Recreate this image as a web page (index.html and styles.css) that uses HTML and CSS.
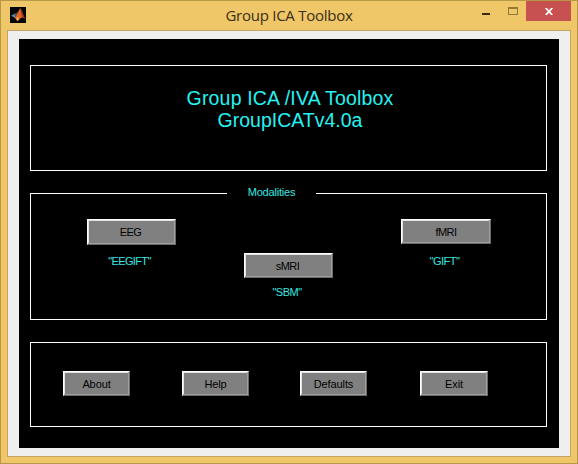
FILE: index.html
```html
<!DOCTYPE html>
<html lang="en">
<head>
<meta charset="utf-8">
<title>Group ICA Toolbox</title>
<link rel="stylesheet" href="styles.css">
</head>
<body>
<div class="window">
  <header class="titlebar">
    <svg class="app-icon" viewBox="0 0 16 16" width="16" height="16">
      <rect width="16" height="16" fill="#050608"/>
      <path d="M1 8.7 5 6.6 7 8 5 11Z" fill="#4a91ad"/>
      <path d="M5 6.6 7.2 5.4 10.3 1.3 8.5 8 5 11Z" fill="#61453f"/>
      <path d="M4.5 10.5C7 9 8.3 5 10.3 1.3 11.6 3 13 8 15 11.5 12.8 10 11.5 10 9.7 12 8.3 14.2 7.3 14.6 6.7 13Z" fill="#df6524"/>
      <path d="M6.2 11.3 8.2 9.8 8.8 12.5 7.2 14Z" fill="#f4b354"/>
      <path d="M10.3 1.3 11 6 12.2 9.8 15 11.5C13 7.5 11.8 3 10.3 1.3Z" fill="#99351c"/>
    </svg>
    <h1 class="caption">Group ICA Toolbox</h1>
    <div class="controls">
      <span class="minimize"></span>
      <span class="maximize"></span>
      <span class="close">
        <svg viewBox="0 0 8 7" width="8" height="7"><path d="M.7 0 7.3 7M7.3 0 .7 7" stroke="#fff" stroke-width="1.8"/></svg>
      </span>
    </div>
  </header>
  <main class="client">
    <div class="figure">
      <section class="frame banner">
        <p class="product">Group ICA /IVA Toolbox</p>
        <p class="version">GroupICATv4.0a</p>
      </section>
      <section class="frame modalities">
        <h2 class="legend">Modalities</h2>
        <div class="modality eeg"><button>EEG</button><span>"EEGIFT"</span></div>
        <div class="modality smri"><button>sMRI</button><span>"SBM"</span></div>
        <div class="modality fmri"><button>fMRI</button><span>"GIFT"</span></div>
      </section>
      <section class="frame actions">
        <button>About</button>
        <button class="help">Help</button>
        <button class="defaults">Defaults</button>
        <button class="exit">Exit</button>
      </section>
    </div>
  </main>
</div>
</body>
</html>
```

FILE: styles.css
```css
* { box-sizing: border-box; }
body { margin: 0; overflow: hidden; font-family: "Liberation Sans", Arial, sans-serif; }
h1, h2, p { margin: 0; font-weight: normal; }

.window {
  width: 578px;
  height: 464px;
  padding: 0 6px 6px;
  border: 1px solid #b99748;
  background: #efc769;
}
.titlebar { position: relative; height: 29px; }
.app-icon { position: absolute; left: 3px; top: 6px; }
.caption {
  padding-top: 3px;
  text-align: center;
  font: 15px/22px "Open Sans", "Noto Sans", sans-serif;
  letter-spacing: -.25px;
  color: #3a2d14;
}
.controls {
  position: absolute;
  top: 0;
  right: 0;
  display: flex;
  align-items: flex-start;
}
.minimize { width: 8px; height: 2px; margin: 12px 18px 0 0; background: #382b0e; }
.maximize { width: 10px; height: 8px; margin: 6px 8px 0 0; border: 1px solid #967736; border-top-width: 2px; }
.close {
  display: flex;
  align-items: center;
  justify-content: center;
  width: 45px;
  height: 20px;
  background: #c75050;
}

.client {
  width: 564px;
  height: 427px;
  padding: 8px 11px;
  border: 1px solid #c2a566;
  background: #efefef;
}
.figure {
  width: 540px;
  height: 409px;
  padding: 26px 12px 0 11px;
  background: #000;
}
.frame { border: 1px solid #fff; }

.banner {
  height: 106px;
  padding: 21px 0 0 3px;
  text-align: center;
  font-size: 19.5px;
  line-height: 22px;
  color: #26f2f2;
}
.product { letter-spacing: .17px; }
.modalities {
  position: relative;
  display: flex;
  align-items: flex-start;
  height: 127px;
  margin-top: 22px;
  padding: 25px 0 0 56px;
}
.legend {
  position: absolute;
  top: -9px;
  left: 196px;
  width: 89px;
  background: #000;
  text-align: center;
  font-size: 11px;
  line-height: 15px;
  letter-spacing: -.2px;
  color: #38e6e2;
}
.modality {
  display: flex;
  flex-direction: column;
  align-items: center;
  width: 89px;
  font-size: 11px;
  line-height: 15px;
  color: #38e6e2;
}
.modality button { width: 100%; padding-right: 2px; letter-spacing: -.5px; }
.modality span { margin: 7px 3px 0 0; letter-spacing: -.5px; }
.eeg button { height: 26px; padding-top: 0; }
.modality.eeg span { margin: 9px 4px 0 0; letter-spacing: -.65px; }
.smri { margin: 34px 0 0 68px; }
.fmri { width: 90px; margin-left: 68px; }
.fmri button { padding-right: 0; }
.modality.fmri span { margin-top: 10px; }

.actions {
  display: flex;
  height: 85px;
  margin-top: 22px;
  padding: 28px 0 0 32px;
}
button {
  width: 67px;
  height: 25px;
  padding: 2px 0 0;
  border: 1px solid;
  border-color: #fff #696969 #696969 #fff;
  background: #808080;
  box-shadow: inset -1px -1px #a0a0a0, inset 1px 1px #e3e3e3;
  font: 11px/15px "Liberation Sans", Arial, sans-serif;
  letter-spacing: -.1px;
  color: #000;
}
.help { margin-left: 52px; }
.defaults { margin-left: 51px; }
.exit { width: 68px; margin-left: 53px; }
```
